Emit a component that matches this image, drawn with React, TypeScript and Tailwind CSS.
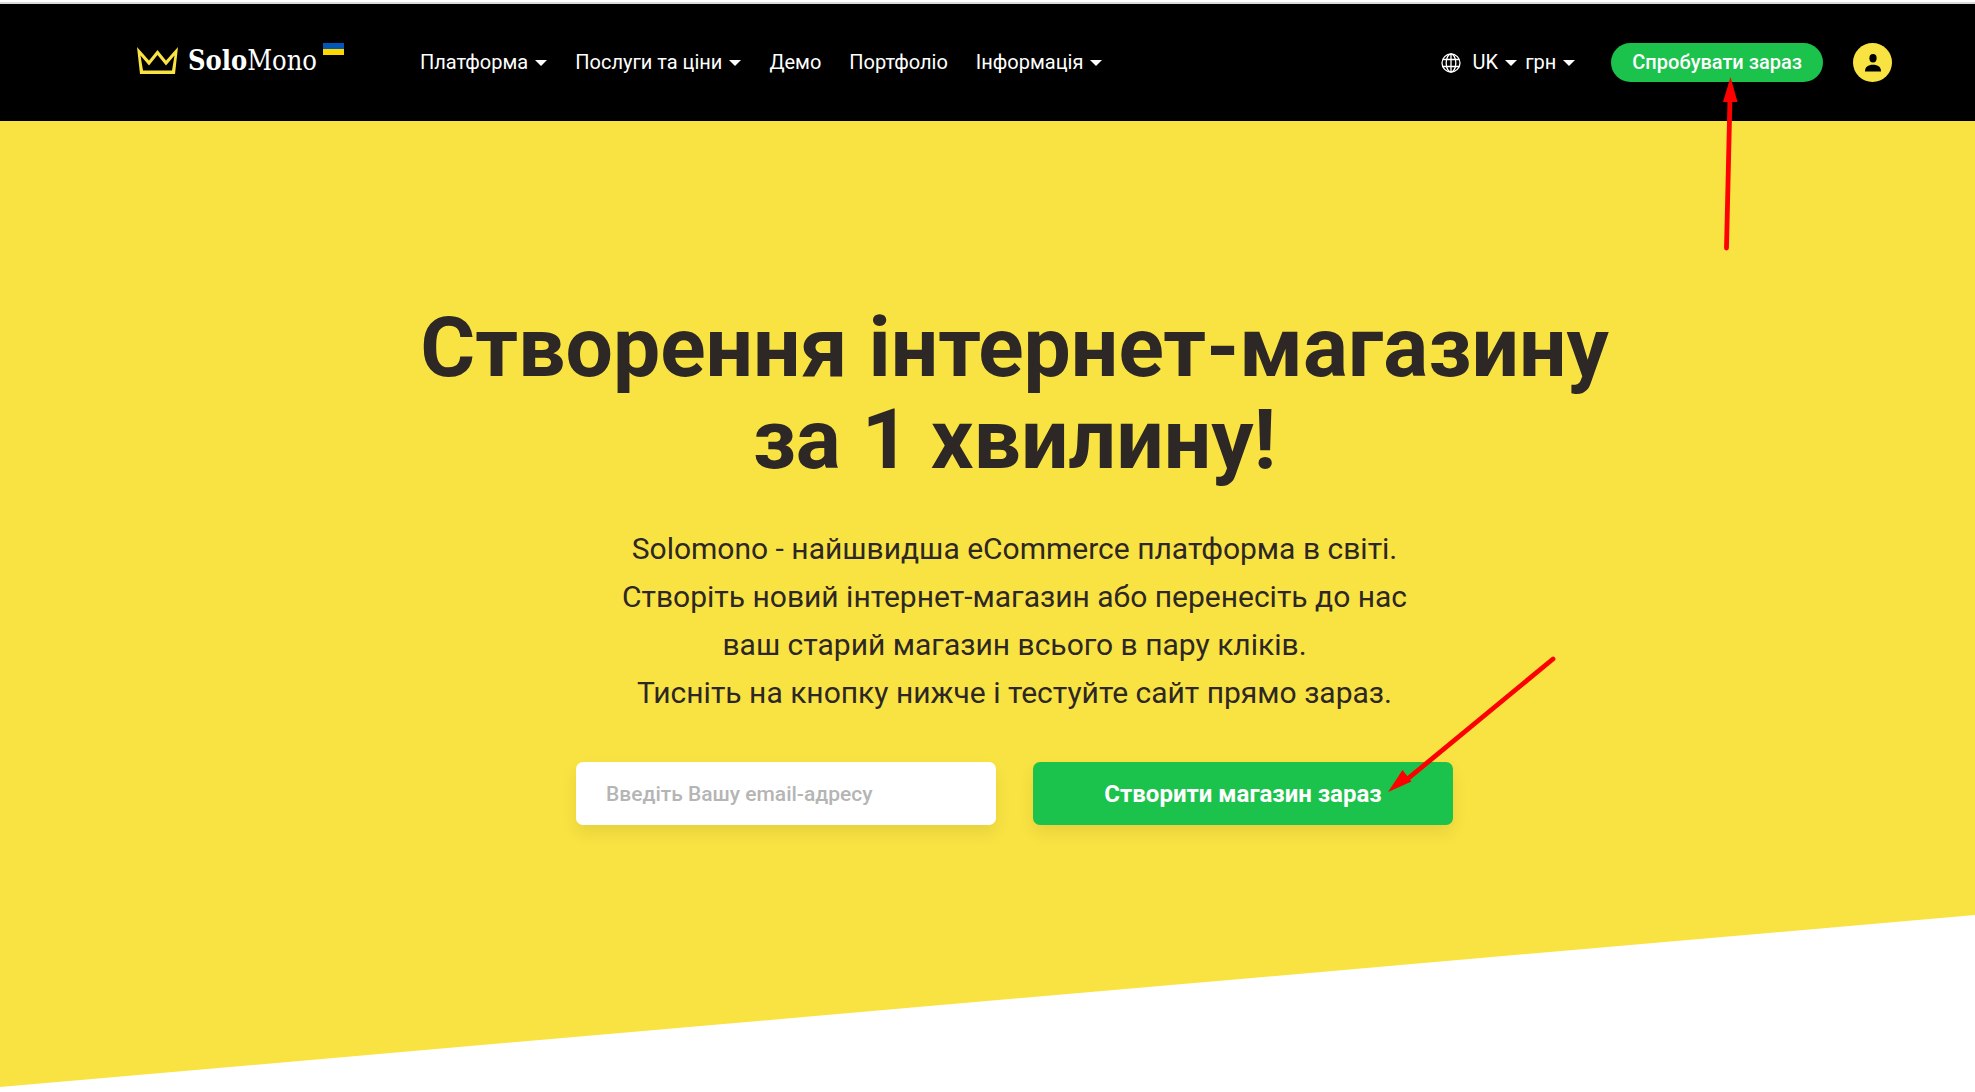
import type { ReactNode } from "react";

function Caret() {
    return (
        <svg width="12" height="6" viewBox="0 0 12 6" fill="currentColor" aria-hidden="true">
            <path d="M0 0h12L6 6z" />
        </svg>
    );
}

function Crown() {
    return (
        <svg width="41" height="27" viewBox="0 0 41 27" fill="none" aria-hidden="true">
            <path
                fill="#f9e342"
                fillRule="evenodd"
                d="M0 0L12 13.500L20.500 3L29 13.500L41 0L38 27H3ZM3.500 8.500L6 23.500H35L37.500 8.500L29 18.500L20.500 8L12 18.500Z"
            />
        </svg>
    );
}

function Globe() {
    return (
        <svg width="20" height="20" viewBox="0 0 20 20" fill="none" stroke="currentColor" strokeWidth="1.3" aria-hidden="true">
            <circle cx="10" cy="10" r="9" />
            <ellipse cx="10" cy="10" rx="4.8" ry="9" />
            <path d="M10 1v18M2 6.500h16M2 13.500h16" />
        </svg>
    );
}

function UserIcon() {
    return (
        <svg width="16" height="18" viewBox="0 0 16 18" fill="currentColor" aria-hidden="true">
            <ellipse cx="8" cy="4.2" rx="3.6" ry="4.2" />
            <path d="M0 17.5C0 13 3 10.8 8 10.8S16 13 16 17.5Z" />
        </svg>
    );
}

const navItems = [
    { label: "Платформа", menu: true },
    { label: "Послуги та ціни", menu: true },
    { label: "Демо", menu: false },
    { label: "Портфоліо", menu: false },
    { label: "Інформація", menu: true },
];

function MenuButton({ children }: { children: ReactNode }) {
    return (
        <button type="button" className="flex items-center gap-[7px]">
            {children}
            <Caret />
        </button>
    );
}

function Header() {
    return (
        <header className="flex items-center bg-black py-[39px] pl-[137px] pr-[83px] text-[20px] leading-[39px] text-white">
            <a href="#" className="-mt-1 flex items-center gap-[10px]">
                <Crown />
                <span className="flex gap-[6px]">
                    <span className="font-['DejaVu_Serif_Condensed','DejaVu_Serif',serif] text-[27px]">
                        <b>Solo</b>Mono
                    </span>
                    <svg width="21" height="12" viewBox="0 0 21 12" className="mt-0.5" aria-hidden="true">
                        <path fill="#0057b8" d="M0 0h21v6H0z" />
                        <path fill="#ffd700" d="M0 6h21v6H0z" />
                    </svg>
                </span>
            </a>

            <nav className="ml-[76px] flex items-center gap-7">
                {navItems.map((item) =>
                    item.menu ? (
                        <MenuButton key={item.label}>{item.label}</MenuButton>
                    ) : (
                        <a key={item.label} href="#">
                            {item.label}
                        </a>
                    )
                )}
            </nav>

            <div className="ml-auto flex items-center">
                <div className="flex items-center gap-2">
                    <span className="mr-1">
                        <Globe />
                    </span>
                    <MenuButton>UK</MenuButton>
                    <MenuButton>грн</MenuButton>
                </div>
                <button type="button" className="ml-9 rounded-full bg-[#1bc24b] px-[21px] font-medium">
                    Спробувати зараз
                </button>
                <button
                    type="button"
                    aria-label="Увійти"
                    className="ml-[30px] flex size-[39px] items-center justify-center rounded-full bg-[#f9e342] text-black"
                >
                    <UserIcon />
                </button>
            </div>
        </header>
    );
}

function Hero() {
    return (
        <section className="relative text-center text-[#2d2726]">
            <svg className="absolute inset-0 -z-10 h-full w-full" viewBox="0 0 100 966" preserveAspectRatio="none" aria-hidden="true">
                <path fill="#f9e342" d="M0 0H100V794L0 966Z" />
            </svg>
            <div className="flex flex-col items-center pb-[262px] pl-[54px] pt-[181px]">
                <h1 className="text-[84px] font-bold leading-[92px]">
                    Створення інтернет-магазину
                    <br />
                    за 1 хвилину!
                </h1>
                <p className="mt-[39px] text-[30px] leading-[48px]">
                    Solomono - найшвидша eCommerce платформа в світі.
                    <br />
                    Створіть новий інтернет-магазин або перенесіть до нас
                    <br />
                    ваш старий магазин всього в пару кліків.
                    <br />
                    Тисніть на кнопку нижче і тестуйте сайт прямо зараз.
                </p>
                <form className="mt-[45px] grid w-full max-w-[877px] grid-cols-2 gap-[37px]">
                    <input
                        type="email"
                        aria-label="Email"
                        placeholder="Введіть Вашу email-адресу"
                        className="h-[63px] min-w-0 rounded-[7px] bg-white px-[30px] text-[21px] font-medium shadow-[0_8px_16px_rgba(0,0,0,0.08)] placeholder:text-[#b5b5b5]"
                    />
                    <button
                        type="button"
                        className="h-[63px] rounded-[7px] bg-[#1bc24b] text-[24px] font-bold text-white shadow-[0_8px_16px_rgba(0,0,0,0.08)]"
                    >
                        Створити магазин зараз
                    </button>
                </form>
            </div>
        </section>
    );
}

// Red pointers drawn over both call-to-action buttons
function Arrows() {
    return (
        <>
            <svg className="absolute right-[234px] top-[77px]" width="20" height="176" viewBox="0 0 20 176" aria-hidden="true">
                <path d="M9 20L5.5 171" stroke="#fe0000" strokeWidth="4.8" strokeLinecap="round" />
                <path d="M9.5 0L16.5 25H2Z" fill="#fe0000" />
            </svg>
            <svg className="absolute right-[418px] top-[654px]" width="170" height="140" viewBox="0 0 170 140" aria-hidden="true">
                <path d="M166 5L18 127" stroke="#fe0000" strokeWidth="4.8" strokeLinecap="round" />
                <path d="M1 138L15.5 116L24.5 127.5Z" fill="#fe0000" />
            </svg>
        </>
    );
}

export default function App() {
    return (
        <div className="relative isolate overflow-hidden bg-white font-[Roboto,sans-serif]">
            <div className="h-1 border-b-2 border-[#dadada]" />
            <Header />
            <Hero />
            <Arrows />
        </div>
    );
}
